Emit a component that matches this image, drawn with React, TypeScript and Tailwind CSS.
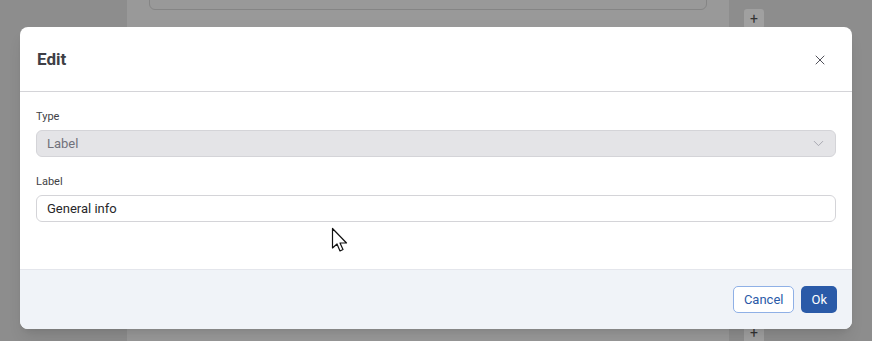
import React from 'react';
import { X, ChevronDown } from 'lucide-react';

const App: React.FC = () => {
  return (
    <div
      className="relative w-[872px] h-[341px] overflow-hidden bg-[#8d8d8d]"
      style={{ fontFamily: 'Roboto, "Liberation Sans", sans-serif' }}
    >
      {/* page behind the overlay */}
      <div className="absolute left-[127px] top-[-20px] w-[602px] h-[400px] rounded-[12px] bg-[#999999]">
        <div className="ml-[22px] mr-[22px] h-[30px] rounded-b-[6px] border border-[#858585]" />
      </div>
      <div className="absolute left-[744px] top-[9px] w-[20px] h-[20px] rounded-[3px] bg-[#a0a0a0] flex items-center justify-center text-[14px] leading-none text-[#333]">+</div>
      <div className="absolute left-[744px] top-[324px] w-[20px] h-[20px] rounded-[3px] bg-[#a0a0a0] flex items-start justify-center pt-[2px] text-[14px] leading-none text-[#333]">+</div>

      {/* modal */}
      <div className="absolute left-[20px] top-[27px] w-[832px] rounded-[8px] bg-white overflow-hidden shadow-lg">
        <div className="h-[65px] flex items-center justify-between pl-[17px] pr-[24px] border-b border-[#d4d4d8]">
          <h2 className="text-[17px] font-bold text-[#3f3f46] mt-[2px]">Edit</h2>
          <X size={16} strokeWidth={1.5} className="text-[#52525b] mt-[2px]" />
        </div>
        <div className="px-[16px] pt-[18px] pb-[47px]">
          <label className="block text-[11px] leading-[14px] text-[#3f3f46] mb-[6px]">Type</label>
          <div className="h-[27px] rounded-[6px] border border-[#d4d4d8] bg-[#e4e4e7] flex items-center justify-between pl-[10px] pr-[8px]">
            <span className="text-[13px] text-[#71717a]">Label</span>
            <ChevronDown size={17} strokeWidth={1.25} className="text-[#a1a1aa]" />
          </div>
          <label className="block text-[11px] leading-[14px] text-[#3f3f46] mt-[18px] mb-[6px]">Label</label>
          <div className="h-[27px] rounded-[6px] border border-[#d4d4d8] bg-white flex items-center pl-[10px]">
            <span className="text-[13px] text-[#27272a]">General info</span>
          </div>
        </div>
        <div className="h-[60px] bg-[#f0f3f8] border-t border-[#e4e6ec] flex items-center justify-end gap-[7px] px-[15px]">
          <button className="h-[27px] px-[10px] rounded-[5px] border border-[#8fb0e6] bg-white text-[13px] text-[#2a5aa8]">Cancel</button>
          <button className="h-[27px] px-[10px] rounded-[5px] bg-[#2a5aa8] text-[13px] text-white">Ok</button>
        </div>
      </div>

      {/* mouse cursor */}
      <svg className="absolute left-[331px] top-[227px]" width="20" height="28" viewBox="0 0 20 28">
        <path d="M1.5 1.5 L1.5 21 L6 17 L9 24 L12 22.5 L9 16 L15.5 16 Z" fill="white" stroke="#111" strokeWidth="1.2" strokeLinejoin="round" />
      </svg>
    </div>
  );
};

export default App;
